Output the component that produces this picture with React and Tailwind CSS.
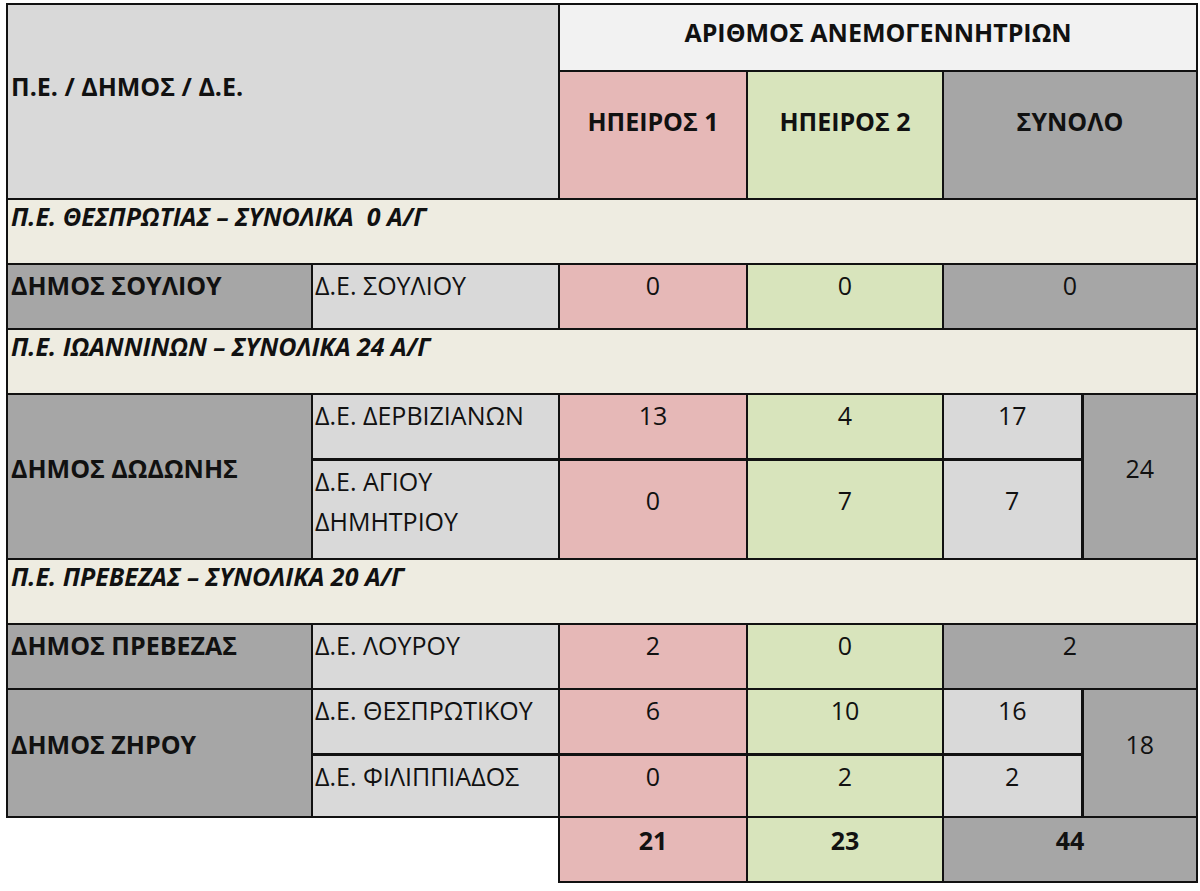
const PINK = "bg-[#e6b8b7]";
const GREEN = "bg-[#d8e4bc]";
const DARK = "bg-[#a6a6a6]";
const LIGHT = "bg-[#d9d9d9]";
const CREAM = "bg-[#eeece1]";

const cell = "border-2 border-[#111] p-0";

function Section({ children }) {
  return (
    <tr>
      <td colSpan={6} className={`${cell} ${CREAM} h-[65px] align-top px-[3px] leading-[32px] font-bold italic whitespace-pre`}>
        {children}
      </td>
    </tr>
  );
}

function Num({ bg, children, span = 1, bold = false }) {
  return (
    <td colSpan={span} className={`${cell} ${bg} align-top text-center leading-[40px] ${bold ? "font-bold" : ""}`}>
      {children}
    </td>
  );
}

export default function App() {
  return (
    <div className="min-h-screen bg-white pt-[3px] pl-[6px] text-[#111] text-[25px]" style={{ fontFamily: '"Open Sans", "Noto Sans", sans-serif' }}>
      <table className="border-collapse table-fixed w-[1190px]">
        <colgroup>
          <col className="w-[305px]" />
          <col className="w-[247px]" />
          <col className="w-[188px]" />
          <col className="w-[196px]" />
          <col className="w-[139px]" />
          <col className="w-[115px]" />
        </colgroup>
        <tbody>
          {/* header */}
          <tr>
            <td rowSpan={2} colSpan={2} className={`${cell} ${LIGHT} align-middle px-[3px] pb-[32px] font-bold leading-[40px]`}>
              Π.Ε. / ΔΗΜΟΣ / Δ.Ε.
            </td>
            <td colSpan={4} className={`${cell} bg-[#f2f2f2] h-[67px] align-middle text-center pb-[11px] font-bold leading-[40px]`}>
              ΑΡΙΘΜΟΣ ΑΝΕΜΟΓΕΝΝΗΤΡΙΩΝ
            </td>
          </tr>
          <tr>
            <td className={`${cell} ${PINK} h-[128px] align-middle text-center pb-[28px] font-bold leading-[40px]`}>ΗΠΕΙΡΟΣ 1</td>
            <td className={`${cell} ${GREEN} align-middle text-center pb-[28px] font-bold leading-[40px]`}>ΗΠΕΙΡΟΣ 2</td>
            <td colSpan={2} className={`${cell} ${DARK} align-middle text-center pb-[28px] font-bold leading-[40px]`}>ΣΥΝΟΛΟ</td>
          </tr>

          <Section>Π.Ε. ΘΕΣΠΡΩΤΙΑΣ – ΣΥΝΟΛΙΚΑ  0 Α/Γ</Section>
          <tr>
            <td className={`${cell} ${DARK} h-[65px] align-top px-[3px] font-bold leading-[40px]`}>ΔΗΜΟΣ ΣΟΥΛΙΟΥ</td>
            <td className={`${cell} ${LIGHT} align-top px-[2px] leading-[40px]`}>Δ.Ε. ΣΟΥΛΙΟΥ</td>
            <Num bg={PINK}>0</Num>
            <Num bg={GREEN}>0</Num>
            <Num bg={DARK} span={2}>0</Num>
          </tr>

          <Section>Π.Ε. ΙΩΑΝΝΙΝΩΝ – ΣΥΝΟΛΙΚΑ 24 Α/Γ</Section>
          <tr>
            <td rowSpan={2} className={`${cell} ${DARK} align-middle px-[3px] pb-[18px] font-bold leading-[40px]`}>ΔΗΜΟΣ ΔΩΔΩΝΗΣ</td>
            <td className={`${cell} ${LIGHT} h-[65px] align-top px-[2px] leading-[40px]`}>Δ.Ε. ΔΕΡΒΙΖΙΑΝΩΝ</td>
            <Num bg={PINK}>13</Num>
            <Num bg={GREEN}>4</Num>
            <Num bg={LIGHT}>17</Num>
            <td rowSpan={2} className={`${cell} border-l-[3px] ${DARK} align-middle text-center pb-[18px] leading-[40px]`}>24</td>
          </tr>
          <tr>
            <td className={`${cell} border-t-[3px] ${LIGHT} h-[100px] align-top px-[2px] leading-[40px]`}>
              Δ.Ε. ΑΓΙΟΥ
              <br />
              ΔΗΜΗΤΡΙΟΥ
            </td>
            <td className={`${cell} border-t-[3px] ${PINK} align-middle text-center pb-[18px] leading-[40px]`}>0</td>
            <td className={`${cell} border-t-[3px] ${GREEN} align-middle text-center pb-[18px] leading-[40px]`}>7</td>
            <td className={`${cell} border-t-[3px] ${LIGHT} align-middle text-center pb-[18px] leading-[40px]`}>7</td>
          </tr>

          <Section>Π.Ε. ΠΡΕΒΕΖΑΣ – ΣΥΝΟΛΙΚΑ 20 Α/Γ</Section>
          <tr>
            <td className={`${cell} ${DARK} h-[65px] align-top px-[3px] font-bold leading-[40px]`}>ΔΗΜΟΣ ΠΡΕΒΕΖΑΣ</td>
            <td className={`${cell} ${LIGHT} align-top px-[2px] leading-[40px]`}>Δ.Ε. ΛΟΥΡΟΥ</td>
            <Num bg={PINK}>2</Num>
            <Num bg={GREEN}>0</Num>
            <Num bg={DARK} span={2}>2</Num>
          </tr>
          <tr>
            <td rowSpan={2} className={`${cell} ${DARK} align-middle px-[3px] pb-[18px] font-bold leading-[40px]`}>ΔΗΜΟΣ ΖΗΡΟΥ</td>
            <td className={`${cell} ${LIGHT} h-[65px] align-top px-[2px] leading-[40px]`}>Δ.Ε. ΘΕΣΠΡΩΤΙΚΟΥ</td>
            <Num bg={PINK}>6</Num>
            <Num bg={GREEN}>10</Num>
            <Num bg={LIGHT}>16</Num>
            <td rowSpan={2} className={`${cell} border-l-[3px] ${DARK} align-middle text-center pb-[18px] leading-[40px]`}>18</td>
          </tr>
          <tr>
            <td className={`${cell} border-t-[3px] ${LIGHT} h-[63px] align-top px-[2px] leading-[40px]`}>Δ.Ε. ΦΙΛΙΠΠΙΑΔΟΣ</td>
            <td className={`${cell} border-t-[3px] ${PINK} align-top text-center leading-[40px]`}>0</td>
            <td className={`${cell} border-t-[3px] ${GREEN} align-top text-center leading-[40px]`}>2</td>
            <td className={`${cell} border-t-[3px] ${LIGHT} align-top text-center leading-[40px]`}>2</td>
          </tr>

          {/* totals */}
          <tr>
            <td colSpan={2} className="border-0 p-0" />
            <td className={`${cell} ${PINK} h-[65px] align-top text-center pt-[2px] font-bold leading-[40px]`}>21</td>
            <td className={`${cell} ${GREEN} align-top text-center pt-[2px] font-bold leading-[40px]`}>23</td>
            <td colSpan={2} className={`${cell} ${DARK} align-top text-center pt-[2px] font-bold leading-[40px]`}>44</td>
          </tr>
        </tbody>
      </table>
    </div>
  );
}
